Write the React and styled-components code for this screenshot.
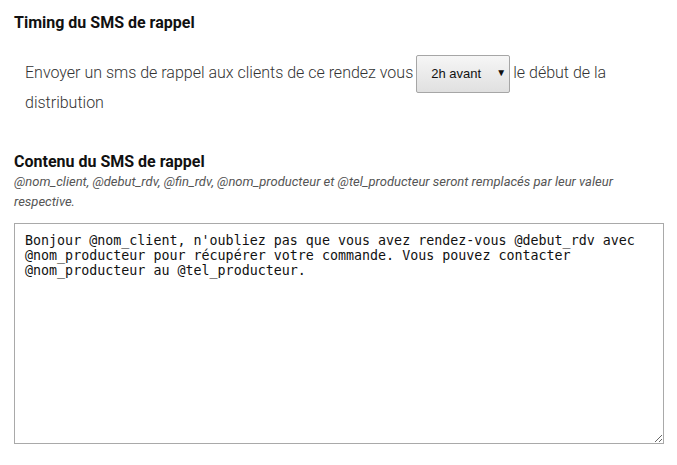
import React from 'react';
import styled, { createGlobalStyle } from 'styled-components';

const GlobalStyle = createGlobalStyle`
  body {
    margin: 0;
    background: #fff;
    font-family: Roboto, "Liberation Sans", sans-serif;
  }
`;

const Page = styled.div`
  padding: 14px 13px 0 14px;
`;

const Section = styled.section`
  margin-bottom: ${props => props.gap || 0}px;
`;

const Heading = styled.h3`
  margin: 0;
  font-size: 16px;
  font-weight: 700;
  line-height: 18px;
  color: #111;
`;

const Sentence = styled.p`
  margin: 26px 0 0 11px;
  font-size: 16px;
  line-height: 30px;
  font-weight: 300;
  color: #333;
`;

const SelectWrap = styled.span`
  position: relative;
  display: inline-block;
  vertical-align: middle;
  margin: -5px 3px -5px 3px;

  &::after {
    content: '▼';
    position: absolute;
    right: 4px;
    top: 13px;
    font-size: 10px;
    line-height: 10px;
    color: #111;
    pointer-events: none;
    font-family: "DejaVu Sans", sans-serif;
  }
`;

const Select = styled.select`
  display: block;
  appearance: none;
  width: 94px;
  height: 38px;
  padding: 0 0 0 14px;
  border: 1px solid #a6a6a6;
  border-radius: 2px;
  background: linear-gradient(#f6f6f6, #e0e0e0);
  font-family: "Liberation Sans", Arial, sans-serif;
  font-size: 13px;
  color: #111;
`;

const Hint = styled.p`
  margin: 1px 0 11px;
  font-size: 13px;
  font-style: italic;
  font-weight: 400;
  line-height: 20px;
  color: #555;
`;

const Message = styled.textarea`
  box-sizing: border-box;
  display: block;
  width: 650px;
  height: 221px;
  padding: 9px 10px;
  border: 1px solid #a9a9a9;
  font-family: "DejaVu Sans Mono", monospace;
  font-size: 13.333px;
  color: #111;
  resize: both;
`;

const MESSAGE = "Bonjour @nom_client, n'oubliez pas que vous avez rendez-vous @debut_rdv avec @nom_producteur pour récupérer votre commande. Vous pouvez contacter @nom_producteur au @tel_producteur.";

export default function App() {
  return (
    <>
      <GlobalStyle />
      <Page>
        <Section gap={35}>
          <Heading>Timing du SMS de rappel</Heading>
          <Sentence>
            Envoyer un sms de rappel aux clients de ce rendez vous
            <SelectWrap>
              <Select defaultValue="2h">
                <option value="1h">1h avant</option>
                <option value="2h">2h avant</option>
                <option value="24h">24h avant</option>
              </Select>
            </SelectWrap>
            le début de la distribution
          </Sentence>
        </Section>
        <Section>
          <Heading>Contenu du SMS de rappel</Heading>
          <Hint>
            @nom_client, @debut_rdv, @fin_rdv, @nom_producteur et @tel_producteur seront remplacés par leur valeur respective.
          </Hint>
          <Message defaultValue={MESSAGE} />
        </Section>
      </Page>
    </>
  );
}
